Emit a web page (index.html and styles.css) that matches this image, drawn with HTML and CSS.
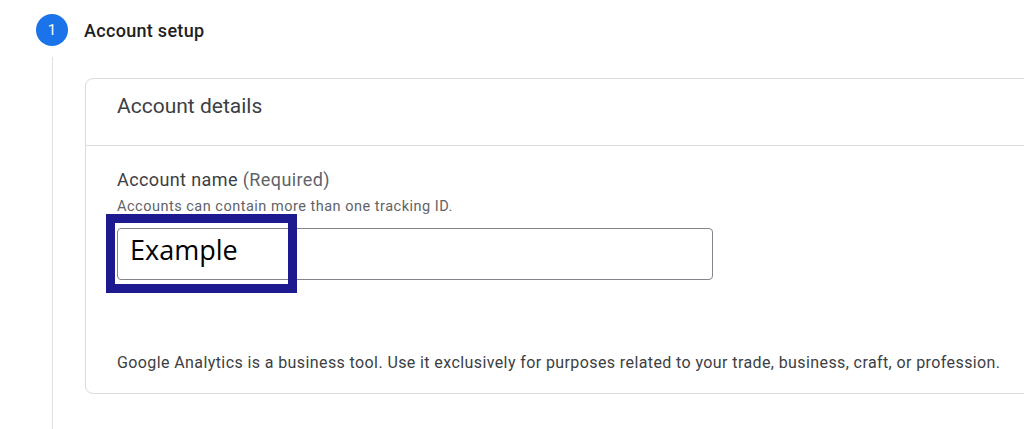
FILE: index.html
```html
<!DOCTYPE html>
<html>
<head>
    <meta charset="UTF-8">
    <title>Create account</title>
    <link rel="stylesheet" href="styles.css">
</head>
<body>
    <div class="step">
        <div class="step-head">
            <span class="step-num">1</span>
            <span class="step-title">Account setup</span>
        </div>

        <div class="step-body">
            <div class="card">
                <div class="card-head">Account details</div>
                <div class="card-body">
                    <label class="field-label" for="account-name">Account name <span class="muted">(Required)</span></label>
                    <div class="hint">Accounts can contain more than one tracking ID.</div>
                    <div class="field">
                        <input type="text" id="account-name" value="Example">
                        <div class="callout"></div>
                    </div>
                    <p class="note">Google Analytics is a business tool. Use it exclusively for purposes related to your trade, business, craft, or profession.</p>
                </div>
            </div>
        </div>
    </div>
</body>
</html>
```

FILE: styles.css
```css
html, body { margin: 0; background: #fff; overflow: hidden; }
body { font-family: Roboto, "Liberation Sans", sans-serif; color: #202124; height: 429px; }

.step { padding: 14px 0 0 36px; }
.step-head { display: flex; align-items: center; gap: 16px; height: 32px; }
.step-num { width: 32px; height: 32px; border-radius: 50%; background: #1a73e8; color: #fff; font-size: 15px; display: flex; align-items: center; justify-content: center; }
.step-title { font-size: 18px; font-weight: 500; letter-spacing: 0.3px; color: #202124; }

/* vertical connector that runs down from the step number */
.step-body { margin: 11px 0 0 16px; border-left: 1px solid #e0e0e0; padding: 21px 0 0 32px; height: 351px; overflow: hidden; }

.card { width: 1000px; border: 1px solid #dadce0; border-radius: 8px; }
.card-head { box-sizing: border-box; height: 67px; padding: 13px 0 0 31px; font-size: 21px; line-height: 28px; color: #3c4043; border-bottom: 1px solid #dadce0; }
.card-body { padding: 21px 31px 19px; }

.field-label { display: block; font-size: 18px; line-height: 26px; letter-spacing: 0.4px; color: #3c4043; }
.muted { color: #5f6368; }
.hint { margin-top: 5px; font-size: 14.5px; line-height: 18px; letter-spacing: 0.5px; color: #5f6368; }

.field { position: relative; margin-top: 12px; width: 596px; }
.field input { box-sizing: border-box; width: 100%; height: 52px; padding: 0 12px 9px; border: 1px solid #80868b; border-radius: 4px; font-family: "Open Sans", sans-serif; font-size: 27px; color: #000; outline: none; }

/* highlight frame drawn over the start of the input */
.callout { position: absolute; left: -11px; top: -14px; width: 191px; height: 79px; box-sizing: border-box; border: 9px solid #1c1a8e; }

.note { margin: 72px 0 0; font-size: 16px; line-height: 22px; letter-spacing: 0.4px; color: #3c4043; }
```
